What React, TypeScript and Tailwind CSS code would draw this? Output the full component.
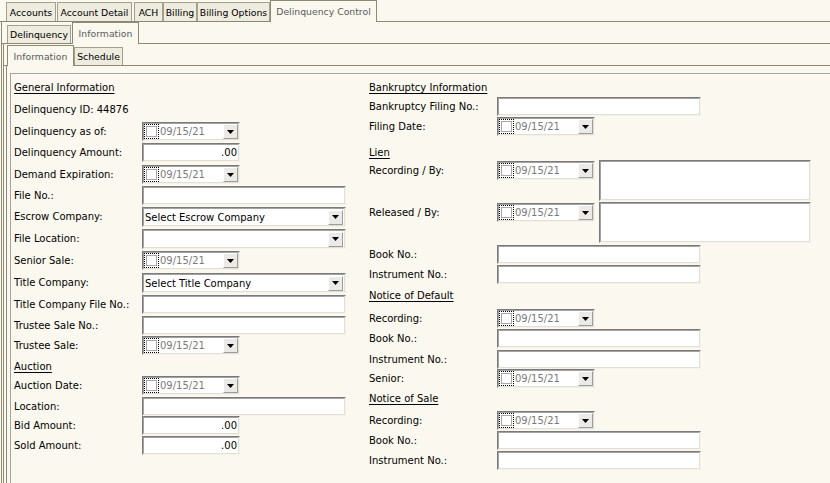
import React from "react";

type Tab = { label: string; w: string; ml: string; h: string; selected?: boolean };

function TabRow({ tabs, pl }: { tabs: Tab[]; pl: string }) {
  return (
    <div className={`h-[22px] shrink-0 flex items-end border-b border-[#8c8a70] ${pl}`}>
      {tabs.map((t) =>
        t.selected ? (
          <div
            key={t.label}
            className={`relative z-10 -mb-px ${t.h} ${t.w} ${t.ml} bg-[#fbf8ef] border border-b-0 border-[#8c8a70] flex items-center justify-center text-[9.3px] text-[#5a5a5a] whitespace-nowrap`}
          >
            {t.label}
          </div>
        ) : (
          <div
            key={t.label}
            className={`${t.h} ${t.w} ${t.ml} bg-[#eeebdf] border border-b-0 border-[#a3a18c] flex items-center justify-center text-[9.3px] text-black whitespace-nowrap`}
          >
            {t.label}
          </div>
        )
      )}
    </div>
  );
}

function Sunken({ cls, children }: { cls: string; children?: React.ReactNode }) {
  return (
    <div className={`${cls} shrink-0 border border-t-[#7a7a7a] border-l-[#7a7a7a] border-r-[#f4f2ea] border-b-[#f4f2ea]`}>
      <div className="h-full w-full border border-t-[#a2a2a2] border-l-[#a2a2a2] border-r-[#e2dfd3] border-b-[#e2dfd3] bg-white flex items-center overflow-hidden">
        {children}
      </div>
    </div>
  );
}

function DropBtn({ mr }: { mr: string }) {
  return (
    <div className={`ml-auto ${mr} w-[15px] h-[15px] shrink-0 bg-[#ebeae6] border border-t-white border-l-white border-r-[#9c9c9c] border-b-[#9c9c9c] flex items-center justify-center`}>
      <svg width="7" height="4" viewBox="0 0 7 4">
        <path d="M0 0H7L3.5 4Z" fill="#000" />
      </svg>
    </div>
  );
}

function DateBox() {
  return (
    <Sunken cls="w-[98px] h-[19px]">
      <div className="ml-0 w-[15px] h-[15px] border border-dotted border-black flex items-center justify-center shrink-0">
        <div className="w-[11px] h-[11px] bg-white border border-[#a8a8a8]" />
      </div>
      <span className="ml-[1px] text-[#7a7a7a]">09/15/21</span>
      <DropBtn mr="mr-0" />
    </Sunken>
  );
}

function TextBox({ w }: { w: string }) {
  return <Sunken cls={`${w} h-[19px]`} />;
}

function Amount() {
  return (
    <Sunken cls="w-[98px] h-[19px]">
      <span className="ml-auto mr-[1px]">.00</span>
    </Sunken>
  );
}

function SelectBox({ text }: { text: string }) {
  return (
    <Sunken cls="w-[204px] h-[20px]">
      <span className="ml-[1px] whitespace-nowrap">{text}</span>
      <DropBtn mr="mr-[1px]" />
    </Sunken>
  );
}

function Row({
  h,
  label,
  children,
  mt = "mt-0",
}: {
  h: string;
  label: string;
  children?: React.ReactNode;
  mt?: string;
}) {
  return (
    <div className={`${h} flex items-start shrink-0`}>
      <div className={`w-[128px] h-[19px] ${mt} flex items-center shrink-0 whitespace-nowrap`}>{label}</div>
      {children}
    </div>
  );
}

function Header({ h, pt, text }: { h: string; pt: string; text: string }) {
  return (
    <div className={`${h} ${pt} shrink-0`}>
      <span className="underline underline-offset-[2px]">{text}</span>
    </div>
  );
}

export default function App() {
  const row1: Tab[] = [
    { label: "Accounts", w: "w-[50px]", ml: "ml-0", h: "h-[19px]" },
    { label: "Account Detail", w: "w-[75px]", ml: "ml-[1px]", h: "h-[19px]" },
    { label: "ACH", w: "w-[29px]", ml: "ml-[2px]", h: "h-[19px]" },
    { label: "Billing", w: "w-[34px]", ml: "ml-0", h: "h-[19px]" },
    { label: "Billing Options", w: "w-[73px]", ml: "ml-0", h: "h-[19px]" },
    { label: "Delinquency Control", w: "w-[107px]", ml: "ml-0", h: "h-[22px]", selected: true },
  ];
  const row2: Tab[] = [
    { label: "Delinquency", w: "w-[64px]", ml: "ml-0", h: "h-[18px]" },
    { label: "Information", w: "w-[67px]", ml: "ml-[1px]", h: "h-[22px]", selected: true },
  ];
  const row3: Tab[] = [
    { label: "Information", w: "w-[67px]", ml: "ml-0", h: "h-[21px]", selected: true },
    { label: "Schedule", w: "w-[49px]", ml: "ml-0", h: "h-[18px]" },
  ];

  return (
    <div className="w-[830px] h-[483px] bg-[#fbf8ef] overflow-hidden flex flex-col text-[10px] leading-[13px] text-black font-['DejaVu_Sans',sans-serif]">
      <TabRow tabs={row1} pl="pl-[6px]" />
      <div className="flex-1 flex flex-col ml-[1px] border-l border-[#8c8a70]">
        <TabRow tabs={row2} pl="pl-[5px]" />
        <div className="flex-1 flex flex-col ml-[1px] border-l border-[#8c8a70]">
          <TabRow tabs={row3} pl="pl-[3px]" />
          <div className="flex-1 flex flex-col ml-[2px] border-l border-[#8c8a70] pt-[7px]">
            <div className="flex-1 flex ml-[3px] border-t border-l border-[#a3a3a3]">
              {/* Left column */}
              <div className="w-[358px] shrink-0 pl-[3px] pt-[7px] flex flex-col">
                <Header h="h-[16px]" pt="pt-0" text="General Information" />
                <div className="h-[25px] flex items-center shrink-0">Delinquency ID: 44876</div>
                <Row h="h-[21px]" label="Delinquency as of:">
                  <DateBox />
                </Row>
                <Row h="h-[22px]" label="Delinquency Amount:">
                  <Amount />
                </Row>
                <Row h="h-[21px]" label="Demand Expiration:">
                  <DateBox />
                </Row>
                <Row h="h-[21px]" label="File No.:">
                  <TextBox w="w-[204px]" />
                </Row>
                <Row h="h-[22px]" label="Escrow Company:">
                  <SelectBox text="Select Escrow Company" />
                </Row>
                <Row h="h-[22px]" label="File Location:">
                  <SelectBox text="" />
                </Row>
                <Row h="h-[22px]" label="Senior Sale:">
                  <DateBox />
                </Row>
                <Row h="h-[22px]" label="Title Company:">
                  <SelectBox text="Select Title Company" />
                </Row>
                <Row h="h-[21px]" label="Title Company File No.:">
                  <TextBox w="w-[204px]" />
                </Row>
                <Row h="h-[20px]" label="Trustee Sale No.:">
                  <TextBox w="w-[204px]" />
                </Row>
                <Row h="h-[20px]" label="Trustee Sale:">
                  <DateBox />
                </Row>
                <div className="h-[20px] flex items-center shrink-0">
                  <span className="underline underline-offset-[2px]">Auction</span>
                </div>
                <Row h="h-[21px]" label="Auction Date:">
                  <DateBox />
                </Row>
                <Row h="h-[19px]" label="Location:">
                  <TextBox w="w-[204px]" />
                </Row>
                <Row h="h-[20px]" label="Bid Amount:">
                  <Amount />
                </Row>
                <Row h="h-[20px]" label="Sold Amount:">
                  <Amount />
                </Row>
              </div>

              {/* Right column */}
              <div className="flex-1 pt-[7px] flex flex-col">
                <Header h="h-[16px]" pt="pt-0" text="Bankruptcy Information" />
                <Row h="h-[20px]" label="Bankruptcy Filing No.:">
                  <TextBox w="w-[204px]" />
                </Row>
                <Row h="h-[27px]" label="Filing Date:">
                  <DateBox />
                </Row>
                <div className="h-[16px] flex items-center shrink-0">
                  <span className="underline underline-offset-[2px]">Lien</span>
                </div>
                <Row h="h-[42px]" label="Recording / By:" mt="mt-[1px]">
                  <div className="mt-[1px]">
                    <DateBox />
                  </div>
                  <div className="ml-[4px]">
                    <Sunken cls="w-[212px] h-[41px]" />
                  </div>
                </Row>
                <Row h="h-[43px]" label="Released / By:" mt="mt-[1px]">
                  <div className="mt-[1px]">
                    <DateBox />
                  </div>
                  <div className="ml-[4px]">
                    <Sunken cls="w-[212px] h-[41px]" />
                  </div>
                </Row>
                <Row h="h-[20px]" label="Book No.:">
                  <TextBox w="w-[204px]" />
                </Row>
                <Row h="h-[20px]" label="Instrument No.:">
                  <TextBox w="w-[204px]" />
                </Row>
                <Header h="h-[24px]" pt="pt-[4px]" text="Notice of Default" />
                <Row h="h-[20px]" label="Recording:">
                  <DateBox />
                </Row>
                <Row h="h-[21px]" label="Book No.:">
                  <TextBox w="w-[204px]" />
                </Row>
                <Row h="h-[19px]" label="Instrument No.:">
                  <TextBox w="w-[204px]" />
                </Row>
                <Row h="h-[20px]" label="Senior:">
                  <DateBox />
                </Row>
                <Header h="h-[22px]" pt="pt-[3px]" text="Notice of Sale" />
                <Row h="h-[20px]" label="Recording:">
                  <DateBox />
                </Row>
                <Row h="h-[20px]" label="Book No.:">
                  <TextBox w="w-[204px]" />
                </Row>
                <Row h="h-[20px]" label="Instrument No.:">
                  <TextBox w="w-[204px]" />
                </Row>
              </div>
            </div>
          </div>
        </div>
      </div>
    </div>
  );
}
